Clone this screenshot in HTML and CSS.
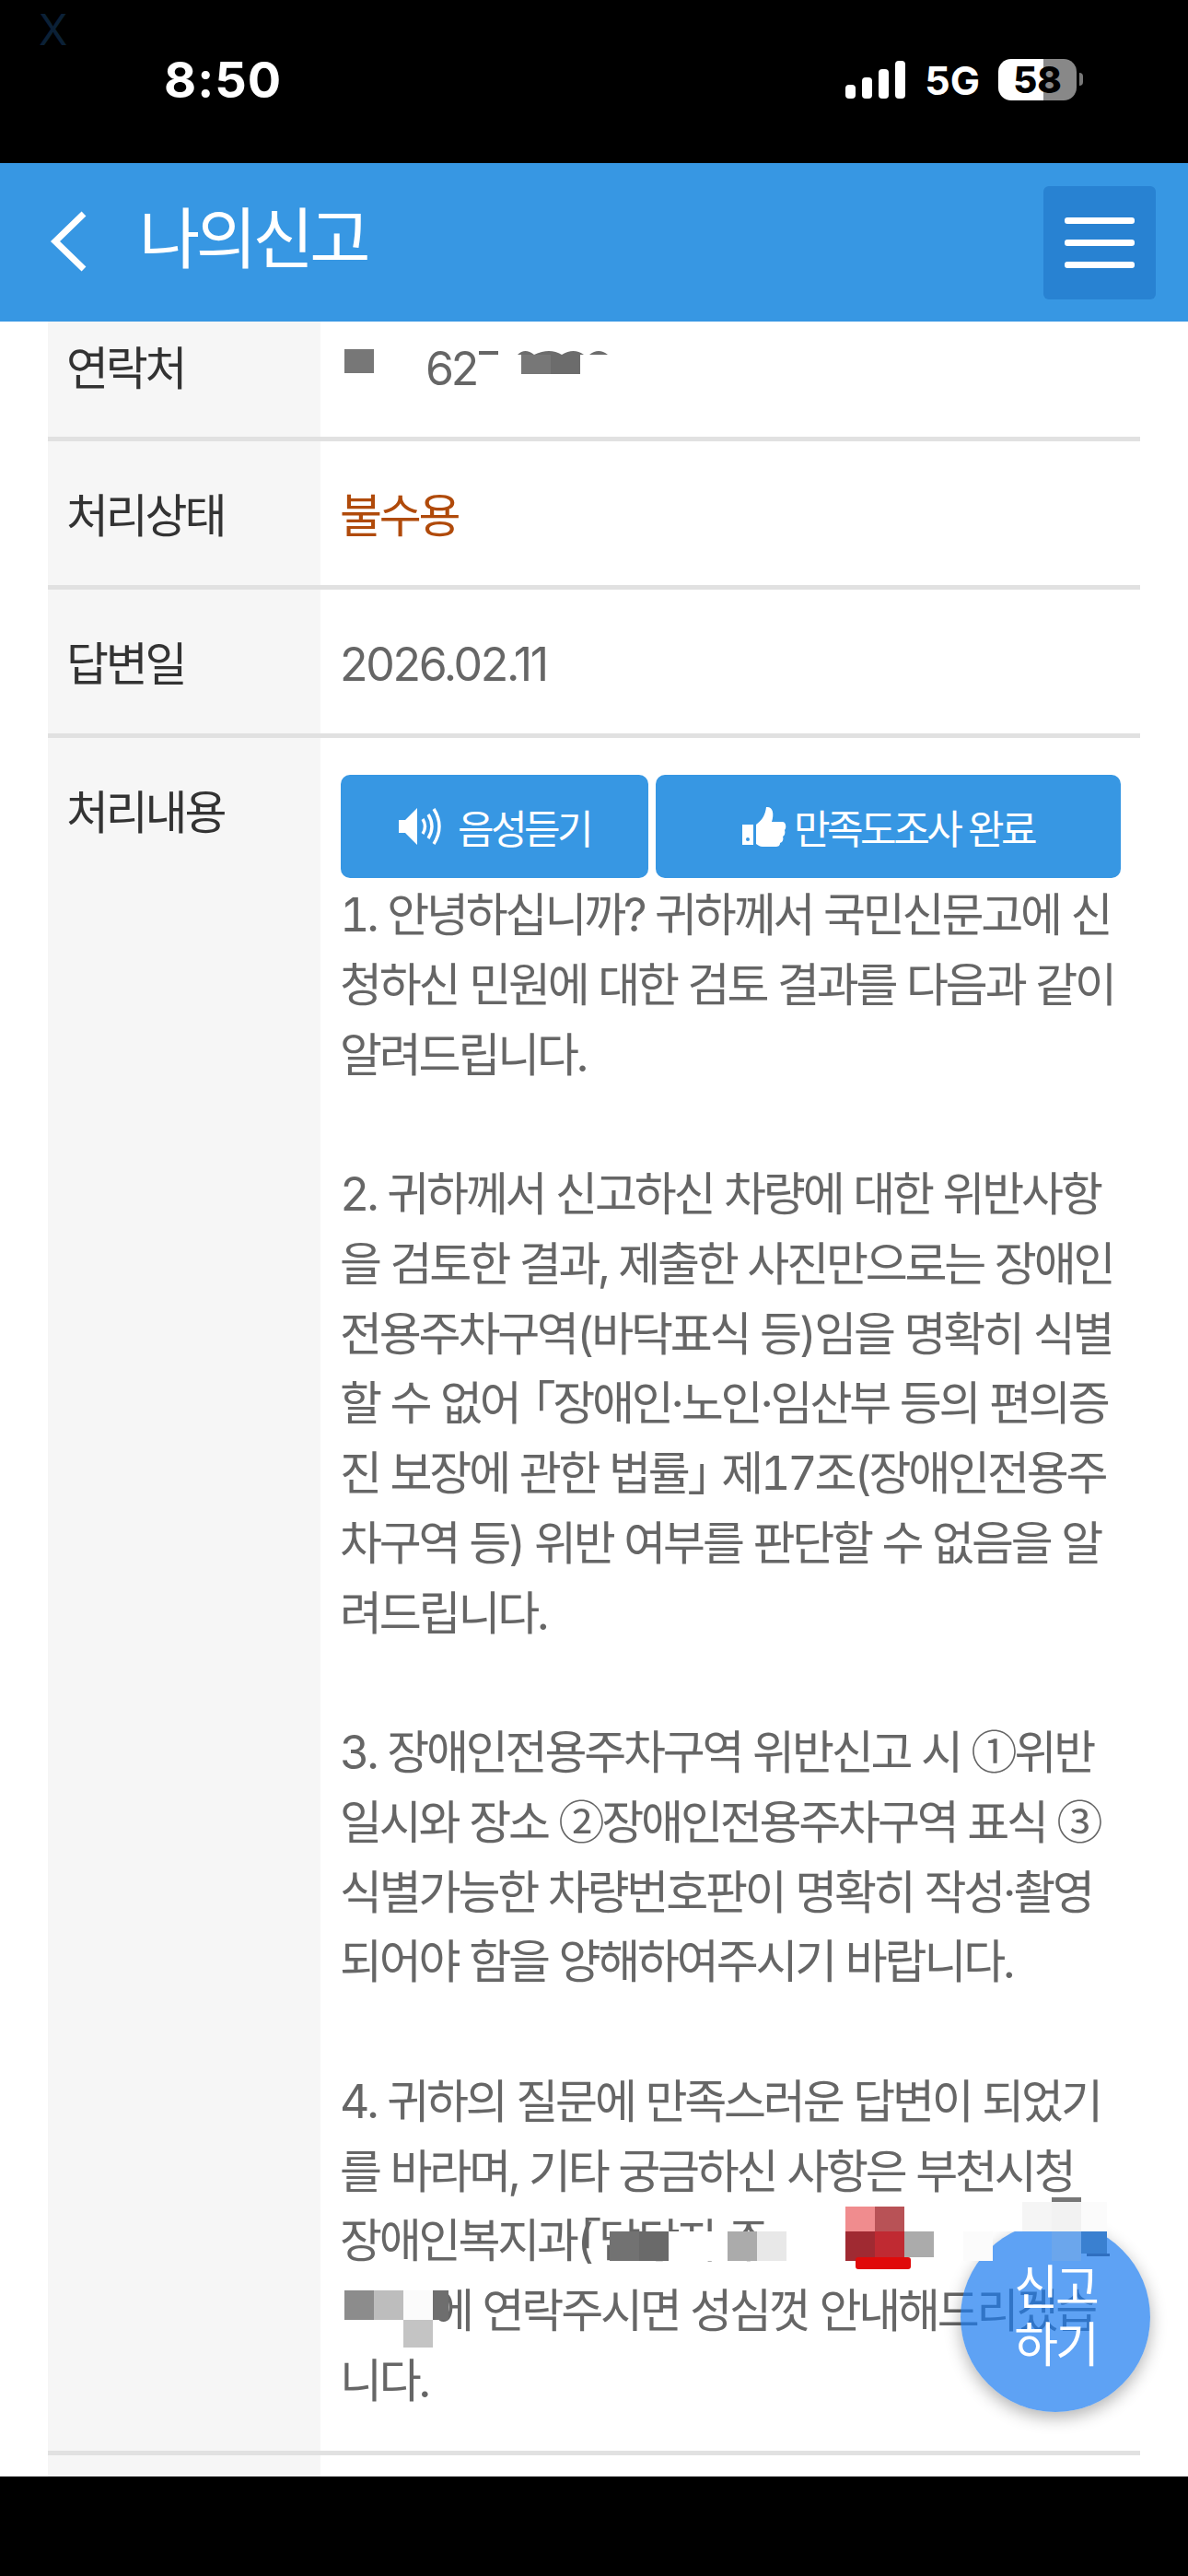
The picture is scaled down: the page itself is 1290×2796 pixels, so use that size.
FILE: index.html
```html
<!DOCTYPE html>
<html lang="ko">

<head>
    <meta charset="UTF-8">
    <meta name="viewport" content="width=device-width, initial-scale=1.0">
    <title>나의신고</title>
    <link rel="stylesheet" href="styles.css">
</head>

<body>

    <div class="screen">
        <div class="statusbar">
            <span class="ghost-x">X</span>
            <span class="clock">8:50</span>
            <div class="status-right">
                <svg class="signal" width="65" height="42" viewBox="0 0 65 42">
                    <rect x="0" y="26" width="11" height="15" rx="4" fill="#fff"/>
                    <rect x="18" y="18" width="11" height="23" rx="4" fill="#fff"/>
                    <rect x="36" y="9" width="11" height="32" rx="4" fill="#fff"/>
                    <rect x="54" y="0" width="11" height="41" rx="4" fill="#fff"/>
                </svg>
                <span class="network">5G</span>
                <div class="battery"><span class="battery-level">58</span></div>
                <div class="battery-nib"></div>
            </div>
        </div>

        <header class="topbar">
            <svg class="back" width="42" height="68" viewBox="0 0 42 68">
                <path d="M37 4 L6 34 L37 64" fill="none" stroke="#fff" stroke-width="7"/>
            </svg>
            <h1 class="title">나의신고</h1>
            <button class="menu-btn" type="button">
                <span></span><span></span><span></span>
            </button>
        </header>

        <main class="content">
            <div class="row row-contact">
                <div class="label">연락처</div>
                <div class="value phone">62</div>
            </div>
            <div class="row">
                <div class="label">처리상태</div>
                <div class="value status">불수용</div>
            </div>
            <div class="row">
                <div class="label">답변일</div>
                <div class="value date">2026.02.11</div>
            </div>
            <div class="row row-answer">
                <div class="label">처리내용</div>
                <div class="value">
                    <div class="actions">
                        <button class="action action-voice" type="button">
                            <svg width="52" height="44" viewBox="0 0 52 44">
                                <path d="M0 15 H7 L20 2 V42 L7 29 H0 Z" fill="#fff"/>
                                <g fill="none" stroke="#fff" stroke-width="3.4">
                                    <path d="M26 14 Q31 22 26 30"/>
                                    <path d="M32 9 Q40 22 32 35"/>
                                    <path d="M38 3 Q50 22 38 41"/>
                                </g>
                            </svg>
                            음성듣기
                        </button>
                        <button class="action action-survey" type="button">
                            <svg width="48" height="44" viewBox="0 0 48 44">
                                <path d="M0 20 H12 V42 H0 Z" fill="#fff"/>
                                <circle cx="6" cy="36" r="2" fill="#3797e3"/>
                                <path d="M15 20 C22 15 25 9 26 1 C33 0 35 8 32 17 H44 C48 18 48 24 46 26 C47 29 46 32 44 33 C45 36 44 39 41 40 C41 43 39 44 36 44 H22 C19 44 17 42 15 41 Z" fill="#fff"/>
                            </svg>
                            만족도조사 완료
                        </button>
                    </div>
                    <p class="answer">1. 안녕하십니까? 귀하께서 국민신문고에 신<br>청하신 민원에 대한 검토 결과를 다음과 같이<br>알려드립니다.<br><br>2. 귀하께서 신고하신 차량에 대한 위반사항<br>을 검토한 결과, 제출한 사진만으로는 장애인<br>전용주차구역(바닥표식 등)임을 명확히 식별<br>할 수 없어 <span class="quote-open">「</span>장애인·노인·임산부 등의 편의증<br>진 보장에 관한 법률<span class="quote-close">」</span> 제17조(장애인전용주<br>차구역 등) 위반 여부를 판단할 수 없음을 알<br>려드립니다.<br><br>3. 장애인전용주차구역 위반신고 시 <span class="circled">①</span>위반<br>일시와 장소 <span class="circled">②</span>장애인전용주차구역 표식 <span class="circled">③</span><br>식별가능한 차량번호판이 명확히 작성·촬영<br>되어야 함을 양해하여주시기 바랍니다.<br><br>4. 귀하의 질문에 만족스러운 답변이 되었기<br>를 바라며, 기타 궁금하신 사항은 부천시청<br>장애인복지과(<span class="quote-paren">「</span>담당자 주<br><span class="answer-gap"></span>에 연락주시면 성심껏 안내해드리겠습<br>니다.</p>
                </div>
            </div>
            <div class="row row-next">
                <div class="label"></div>
                <div class="value"></div>
            </div>
        </main>

        <button class="report-fab" type="button">신고<br>하기</button>

        <!-- mosaic the screenshot's owner put over personal details -->
        <svg class="mosaic" width="1290" height="2796" viewBox="0 0 1290 2796">
            <rect x="374" y="379" width="32" height="26" fill="#777"/>
            <rect x="520" y="381" width="21" height="4" fill="#666"/>
            <path d="M562 385 Q570 377 580 385 Q597 377 610 385 Q623 377 634 385 Z" fill="#6c6c6c"/>
            <path d="M640 385 Q650 377 660 385 Z" fill="#6c6c6c"/>
            <rect x="566" y="385" width="32" height="21" fill="#777"/>
            <rect x="598" y="385" width="32" height="21" fill="#6c6c6c"/>
            <rect x="662" y="2422" width="32" height="32" fill="#727272"/>
            <rect x="694" y="2422" width="32" height="32" fill="#6a6a6a"/>
            <rect x="726" y="2422" width="64" height="32" fill="#fff"/>
            <rect x="790" y="2422" width="32" height="32" fill="#ababab"/>
            <rect x="822" y="2422" width="32" height="32" fill="#e8e8e8"/>
            <rect x="854" y="2422" width="64" height="32" fill="#fff"/>
            <rect x="918" y="2395" width="32" height="27" fill="#f08c8e"/>
            <rect x="950" y="2395" width="32" height="27" fill="#b85256"/>
            <rect x="918" y="2422" width="32" height="32" fill="#a02a32"/>
            <rect x="950" y="2422" width="32" height="32" fill="#c02a32"/>
            <rect x="929" y="2450" width="60" height="13" rx="3" fill="#e00a0a"/>
            <rect x="982" y="2422" width="32" height="28" fill="#ababab"/>
            <rect x="1014" y="2422" width="32" height="32" fill="#fff"/>
            <rect x="1046" y="2422" width="32" height="32" fill="#fbfbfb"/>
            <rect x="1142" y="2385" width="32" height="5" fill="#777"/>
            <rect x="1078" y="2390" width="32" height="32" fill="#fff"/>
            <rect x="1110" y="2390" width="32" height="32" fill="#f5f5f5"/>
            <rect x="1142" y="2390" width="32" height="32" fill="#f2f2f2"/>
            <rect x="1174" y="2390" width="28" height="32" fill="#fbfbfb"/>
            <rect x="1142" y="2422" width="32" height="32" fill="#6ba6ec"/>
            <rect x="1174" y="2422" width="28" height="24" fill="#3a80d0"/>
            <rect x="1180" y="2446" width="25" height="3" fill="#2f6fc0"/>
            <rect x="374" y="2486" width="32" height="32" fill="#8c8c8c"/>
            <rect x="406" y="2486" width="32" height="32" fill="#bdbdbd"/>
            <rect x="438" y="2486" width="32" height="32" fill="#fbfbfb"/>
            <rect x="470" y="2486" width="17" height="32" fill="#6e6e6e"/>
            <rect x="438" y="2518" width="32" height="30" fill="#c4c4c4"/>
        </svg>
    </div>

</body>

</html>
```

FILE: styles.css
```css
html,
body {
    margin: 0;
    padding: 0;
    background-color: #000;
    font-family: Inter, "Noto Sans CJK KR", sans-serif;
}

.screen {
    position: relative;
    width: 1290px;
    height: 2796px;
    overflow: hidden;
    background-color: #000;
}

.statusbar {
    position: relative;
    height: 177px;
    display: flex;
    justify-content: space-between;
    padding: 62px 114px 0 178px;
    box-sizing: border-box;
    color: #fff;
    font-weight: 700;
}

.ghost-x {
    position: absolute;
    left: 42px;
    top: 6px;
    color: #0b2036;
    font-size: 46px;
    font-weight: 400;
    line-height: 52px;
}

.clock {
    font-size: 54px;
    line-height: 50px;
    letter-spacing: 1px;
}

.status-right {
    display: flex;
    align-items: flex-start;
    margin-top: 3px;
}

.signal {
    margin-top: 1px;
    margin-right: 21px;
}

.network {
    font-size: 43px;
    line-height: 44px;
    margin-right: 20px;
}

.battery {
    width: 85px;
    height: 45px;
    margin-top: -1px;
    border-radius: 14px;
    background: linear-gradient(to right, #fff 0, #fff 49px, #888 49px, #888 100%);
    color: #000;
    text-align: center;
    font-size: 40px;
    font-weight: 800;
    line-height: 45px;
}

.battery-nib {
    width: 4px;
    height: 14px;
    margin-top: 14px;
    margin-left: 3px;
    border-radius: 0 4px 4px 0;
    background-color: #777;
}

.topbar {
    height: 172px;
    display: flex;
    align-items: center;
    padding: 0 35px 0 54px;
    box-sizing: border-box;
    background-color: #3797e3;
    color: #fff;
}

.back {
    margin-right: 55px;
    margin-bottom: 2px;
}

.title {
    flex: 1;
    margin: 0 0 8px;
    font-size: 72px;
    font-weight: 400;
    line-height: 84px;
    letter-spacing: -4.5px;
}

.menu-btn {
    width: 122px;
    height: 123px;
    display: flex;
    flex-direction: column;
    justify-content: center;
    align-items: center;
    gap: 17px;
    padding: 0;
    border: none;
    border-radius: 6px;
    background-color: #2882d2;
}

.menu-btn span {
    display: block;
    width: 76px;
    height: 7px;
    border-radius: 3px;
    background-color: #fff;
}

.content {
    height: 2339px;
    overflow: hidden;
    padding: 0 52px;
    background-color: #fff;
}

.row {
    display: flex;
    height: 161px;
    box-sizing: border-box;
    border-bottom: 5px solid #e1e1e1;
    color: #666;
    font-size: 50px;
    letter-spacing: -3.2px;
}

.label {
    flex: 0 0 296px;
    box-sizing: border-box;
    padding: 53px 0 0 20px;
    background-color: #f6f6f6;
    color: #333;
    line-height: 56px;
}

.value {
    flex: 1;
    padding: 53px 20px 0 21px;
    line-height: 56px;
}

.row-contact {
    height: 130px;
}

.row-contact .label,
.row-contact .value {
    padding-top: 23px;
}

.phone {
    padding-left: 114px;
}

.status {
    color: #b04a0a;
}

.date {
    letter-spacing: -2.3px;
}

.row-answer {
    height: auto;
}

.row-answer .label {
    padding-top: 53px;
}

.row-answer .value {
    padding-top: 40px;
    padding-bottom: 37px;
}

.row-next {
    height: 40px;
    border-bottom: none;
}

.actions {
    display: flex;
    gap: 8px;
    height: 112px;
    margin-left: 1px;
}

.action {
    display: flex;
    align-items: center;
    justify-content: center;
    gap: 12px;
    padding: 0;
    border: none;
    border-radius: 10px;
    background-color: #3797e3;
    color: #fff;
    font-family: inherit;
    font-size: 43px;
    letter-spacing: -3.5px;
}

.action-voice {
    width: 334px;
}

.action-survey {
    width: 505px;
    gap: 8px;
}

.answer {
    margin: 3px 0 0;
    white-space: nowrap;
    line-height: 75.75px;
    word-spacing: 1.5px;
    font-variant-numeric: tabular-nums;
}

.quote-open {
    margin-left: -22px;
}

.quote-close {
    margin-right: -22px;
}

.quote-paren {
    margin-left: -14px;
}

.circled {
    font-family: "Noto Sans CJK KR", sans-serif;
    line-height: 0;
}

.answer-gap {
    display: inline-block;
    width: 100px;
}

.report-fab {
    position: absolute;
    left: 1043px;
    top: 2412px;
    width: 206px;
    height: 206px;
    padding: 0;
    border: none;
    border-radius: 50%;
    background-color: rgba(26, 122, 240, 0.7);
    box-shadow: 0 6px 18px rgba(0, 0, 0, 0.3);
    color: #fff;
    font-family: inherit;
    font-size: 52px;
    font-weight: 400;
    line-height: 62px;
    letter-spacing: -3px;
}

.mosaic {
    position: absolute;
    left: 0;
    top: 0;
    pointer-events: none;
}
```
